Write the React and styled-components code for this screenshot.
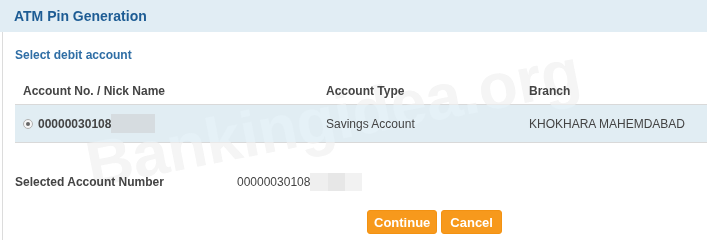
import React from "react";
import styled, { createGlobalStyle } from "styled-components";

const GlobalStyle = createGlobalStyle`
  html, body {
    margin: 0;
    padding: 0;
    background: #fff;
    font-family: "Liberation Sans", Arial, sans-serif;
  }
`;

const Page = styled.div`
  position: relative;
  isolation: isolate;
  width: 707px;
  height: 240px;
  overflow: hidden;
`;

const TitleBar = styled.div`
  height: 32px;
  background: #e1edf4;
  display: flex;
  align-items: center;
  padding-left: 14px;
  font-size: 14px;
  font-weight: bold;
  color: #1d5c94;
`;

const Body = styled.div`
  border-left: 1px solid #dcdcdc;
  margin-left: 2px;
  padding: 14px 0 0 12px;
  height: 194px;
`;

const SectionTitle = styled.div`
  font-size: 12px;
  font-weight: bold;
  color: #2f6ea5;
  height: 18px;
  line-height: 18px;
`;

const Table = styled.div`
  margin-top: 12px;
  display: grid;
  grid-template-columns: 303px 203px 1fr;
  font-size: 12px;
  color: #444;
`;

const HeadCell = styled.div`
  font-weight: bold;
  height: 25px;
  padding-top: 3px;
  line-height: 25px;
  padding-left: 8px;
  border-bottom: 1px solid #d9d9d9;
`;

const Cell = styled.div`
  background: #e1edf3;
  height: 37px;
  display: flex;
  align-items: center;
  padding-left: 8px;
  border-bottom: 1px solid #d9d9d9;
  font-weight: ${(p) => (p.$bold ? "bold" : "normal")};
`;

/* text sits above the faint watermark */
const Label = styled.span`
  position: relative;
  z-index: 2;
  display: inline-flex;
  align-items: center;
`;

const Radio = styled.span`
  width: 10px;
  height: 10px;
  border-radius: 50%;
  border: 1px solid #b0b0b0;
  background: #f6f6f6;
  display: inline-flex;
  align-items: center;
  justify-content: center;
  margin-right: 5px;
  box-sizing: border-box;
  &::after {
    content: "";
    width: 4px;
    height: 4px;
    border-radius: 50%;
    background: #666;
  }
`;

const Mask = styled.span`
  display: inline-block;
  width: ${(p) => p.$w}px;
  height: ${(p) => p.$h}px;
  background: ${(p) => p.$bg};
  filter: blur(0.6px);
`;

const InfoRow = styled.div`
  display: grid;
  grid-template-columns: 222px 1fr;
  align-items: center;
  margin-top: 29px;
  font-size: 12px;
  color: #444;
  height: 20px;
`;

const InfoLabel = styled(Label)`
  font-weight: bold;
`;

const Actions = styled.div`
  display: flex;
  gap: 4px;
  margin-top: 18px;
  padding-left: 352px;
`;

const Button = styled.button`
  height: 24px;
  padding: 0 ${(p) => p.$pad}px;
  background: #f7991c;
  border: 1px solid #f39212;
  border-radius: 3px;
  color: #fff;
  font-family: "Liberation Sans", Arial, sans-serif;
  font-size: 13px;
  font-weight: bold;
  cursor: pointer;
`;

const Watermark = styled.div`
  position: absolute;
  z-index: 1;
  left: 94px;
  top: 128px;
  font-family: "Liberation Sans", Arial, sans-serif;
  font-size: 64px;
  font-weight: bold;
  color: #f0f0f0;
  mix-blend-mode: luminosity;
  opacity: 0.7;
  transform: rotate(-11deg);
  transform-origin: left bottom;
  pointer-events: none;
  white-space: nowrap;
`;

export default function App() {
  return (
    <Page>
      <GlobalStyle />
      <TitleBar>ATM Pin Generation</TitleBar>
      <Body>
        <SectionTitle>Select debit account</SectionTitle>
        <Table>
          <HeadCell><Label>Account No. / Nick Name</Label></HeadCell>
          <HeadCell><Label>Account Type</Label></HeadCell>
          <HeadCell><Label>Branch</Label></HeadCell>
          <Cell $bold>
            <Label>
              <Radio />
              00000030108
              <Mask $w={44} $h={19} $bg="#d6dce0" />
            </Label>
          </Cell>
          <Cell><Label>Savings Account</Label></Cell>
          <Cell><Label>KHOKHARA MAHEMDABAD</Label></Cell>
        </Table>
        <InfoRow>
          <InfoLabel>Selected Account Number</InfoLabel>
          <Label>
            00000030108
            <Mask $w={18} $h={18} $bg="#efefef" />
            <Mask $w={17} $h={18} $bg="#e7e7e7" />
            <Mask $w={17} $h={18} $bg="#f2f2f2" />
          </Label>
        </InfoRow>
        <Actions>
          <Button $pad={6}>Continue</Button>
          <Button $pad={8}>Cancel</Button>
        </Actions>
      </Body>
      <Watermark>Bankingidea.org</Watermark>
    </Page>
  );
}
